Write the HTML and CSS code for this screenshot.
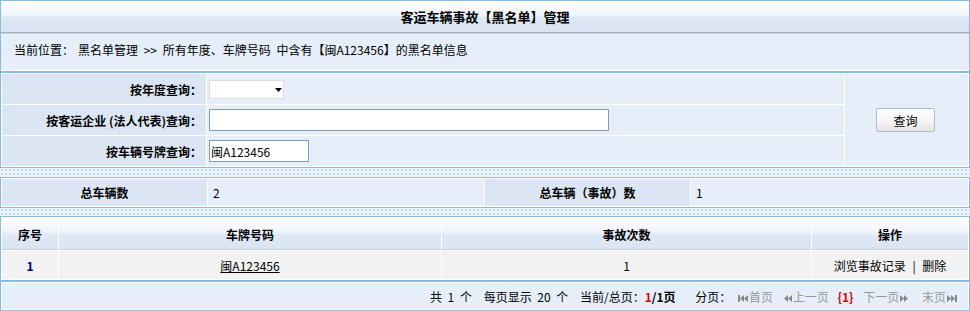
FILE: index.html
```html
<!DOCTYPE html>
<html lang="zh-CN">
<head>
    <meta charset="UTF-8">
    <title>客运车辆事故【黑名单】管理</title>
    <link rel="stylesheet" href="styles.css">
</head>
<body>
    <div class="panel">
        <div class="panel-title">客运车辆事故【黑名单】管理</div>
        <div class="crumb">当前位置：<span class="sp"></span>黑名单管理 &gt;&gt; 所有年度、车牌号码 中含有【闽A123456】的黑名单信息</div>
    </div>

    <table class="grid search">
        <colgroup>
            <col style="width: 204px">
            <col style="width: 637px">
            <col>
        </colgroup>
        <tr>
            <td class="label">按年度查询：</td>
            <td class="field">
                <select class="year-select"><option></option></select>
            </td>
            <td class="action" rowspan="3"><button class="btn">查询</button></td>
        </tr>
        <tr>
            <td class="label">按客运企业 (法人代表)查询：</td>
            <td class="field"><input type="text" class="txt txt-long"></td>
        </tr>
        <tr>
            <td class="label">按车辆号牌查询：</td>
            <td class="field"><input type="text" class="txt txt-short" value="闽A123456"></td>
        </tr>
    </table>

    <table class="grid stats">
        <colgroup>
            <col style="width: 205px">
            <col style="width: 276px">
            <col style="width: 205px">
            <col>
        </colgroup>
        <tr>
            <td class="label center">总车辆数</td>
            <td class="value">2</td>
            <td class="label center">总车辆（事故）数</td>
            <td class="value">1</td>
        </tr>
    </table>

    <table class="grid list">
        <colgroup>
            <col style="width: 56px">
            <col style="width: 382px">
            <col style="width: 369px">
            <col>
        </colgroup>
        <tr class="head">
            <th>序号</th>
            <th>车牌号码</th>
            <th>事故次数</th>
            <th>操作</th>
        </tr>
        <tr class="row">
            <td class="no">1</td>
            <td><a href="#" class="plate">闽A123456</a></td>
            <td>1</td>
            <td class="ops"><a href="#">浏览事故记录</a> | <a href="#">删除</a></td>
        </tr>
    </table>

    <table class="grid pager">
        <tr>
            <td>
                <span>共 1 个</span>
                <span class="ml12">每页显示 20 个</span>
                <span class="ml12">当前/总页：<b class="red">1</b><b>/1页</b></span>
                <span class="ml18">分页：</span>
                <span class="off">
                    <svg class="ico" width="10" height="9" viewBox="0 0 10 9"><rect x="0" y="1" width="2" height="7"/><path d="M6 1L2 4.5L6 8Z M10 1L6 4.5L10 8Z"/></svg>首页
                </span>
                <span class="off ml8">
                    <svg class="ico" width="9" height="9" viewBox="0 0 9 9"><path d="M5 1L1 4.5L5 8Z M9 1L5 4.5L9 8Z"/></svg>上一页
                </span>
                <b class="red ml8">{1}</b>
                <span class="off ml6">下一页<svg class="ico" width="9" height="9" viewBox="0 0 9 9"><path d="M0 1L4 4.5L0 8Z M4 1L8 4.5L4 8Z"/></svg></span>
                <span class="off ml8">末页<svg class="ico" width="10" height="9" viewBox="0 0 10 9"><path d="M0 1L4 4.5L0 8Z M4 1L8 4.5L4 8Z"/><rect x="8" y="1" width="2" height="7"/></svg></span>
            </td>
        </tr>
    </table>
</body>
</html>
```

FILE: styles.css
```css
* {
    box-sizing: border-box;
}

body {
    margin: 0;
    font-family: "Noto Sans CJK SC", "Noto Sans", sans-serif;
    font-size: 12px;
    color: #000;
    background-color: #ebf3fb;
    background-image: radial-gradient(circle, #bfd7eb 0.7px, transparent 1px);
    background-size: 4px 4px;
}

a {
    color: #000;
    text-decoration: none;
}

/* top panel */
.panel {
    border: 1px solid #86bcdc;
    background: #e6eff9;
}

.panel-title {
    height: 32px;
    line-height: 31px;
    text-align: center;
    font-weight: bold;
    font-size: 13px;
    background: linear-gradient(#ffffff 0, #eff4fb 15px, #dde7f4 16px, #dae4f2 31px);
    border-bottom: 1px solid #a3afbb;
}

.crumb {
    height: 38px;
    line-height: 32px;
    padding-left: 13px;
    border-top: 1px solid #ccd7e3;
    border-bottom: 1px solid #fff;
    word-spacing: 3px;
}

.sp {
    display: inline-block;
    width: 4px;
}

/* tables */
.grid {
    width: 100%;
    table-layout: fixed;
    border: 1px solid #86bcdc;
    border-spacing: 1px;
    background: #fff;
}

.grid td,
.grid th {
    padding: 0;
    vertical-align: middle;
}

.label {
    background: #dbe5f3;
    font-weight: bold;
    text-align: right;
    padding-right: 4px !important;
}

.label.center {
    text-align: center;
    padding-right: 0 !important;
}

.field,
.value,
.action {
    background: #e6eff9;
}

.field {
    padding-left: 2px !important;
}

.value {
    padding-left: 5px !important;
}

.search td {
    height: 30px;
}

.action {
    text-align: center;
}

.year-select {
    width: 75px;
    height: 19px;
    margin: 0;
    border: 1px solid #d9dde2;
    background: #fff url("data:image/svg+xml,%3Csvg xmlns='http://www.w3.org/2000/svg' width='7' height='4'%3E%3Cpath d='M0 0h7L3.5 4z'/%3E%3C/svg%3E") no-repeat 65px 7px;
    appearance: none;
    -webkit-appearance: none;
    font: inherit;
    vertical-align: middle;
}

.txt {
    height: 22px;
    margin: 0;
    padding: 0 1px;
    border: 1px solid #7f9db9;
    background: #fff;
    font: inherit;
    font-size: 12px;
    vertical-align: middle;
}

.txt-long {
    width: 400px;
}

.txt-short {
    width: 100px;
}

.btn {
    width: 59px;
    height: 24px;
    margin-right: 2px;
    border: 1px solid #a7bacd;
    border-radius: 2px;
    background: linear-gradient(#ffffff, #f3f3f3 60%, #e4e4e4);
    font: inherit;
    font-size: 12px;
    cursor: pointer;
}

.stats {
    margin-top: 9px;
}

.stats td {
    height: 27px;
}

/* list */
.list {
    margin-top: 8px;
}

.head th {
    height: 32px;
    font-weight: bold;
    background: linear-gradient(#ffffff 0, #eef3fb 14px, #dfe8f5 17px, #dae4f2 31px);
    box-shadow: inset 0 -1px 0 #c4d0dd;
}

.row td {
    height: 28px;
    background: #f2f2f2;
    text-align: center;
}

.row .no {
    font-weight: bold;
    color: #000066;
}

.row .ops {
    word-spacing: 4px;
}

.plate {
    text-decoration: underline;
}

/* pager */
.pager td {
    height: 26px;
    background: #e6eff9;
    text-align: right;
    padding-right: 10px;
    word-spacing: 3px;
    white-space: nowrap;
}

.pager span,
.pager b {
    word-spacing: 3px;
}

.red {
    color: #e00000;
}

.off {
    color: #999;
    word-spacing: 0 !important;
}

.ico {
    display: inline-block;
    fill: #888;
    vertical-align: -1px;
    margin: 0 1px;
}

.ml6 { margin-left: 4px; }
.ml8 { margin-left: 6px; }
.ml12 { margin-left: 6px; }
.ml18 { margin-left: 14px; }
```
